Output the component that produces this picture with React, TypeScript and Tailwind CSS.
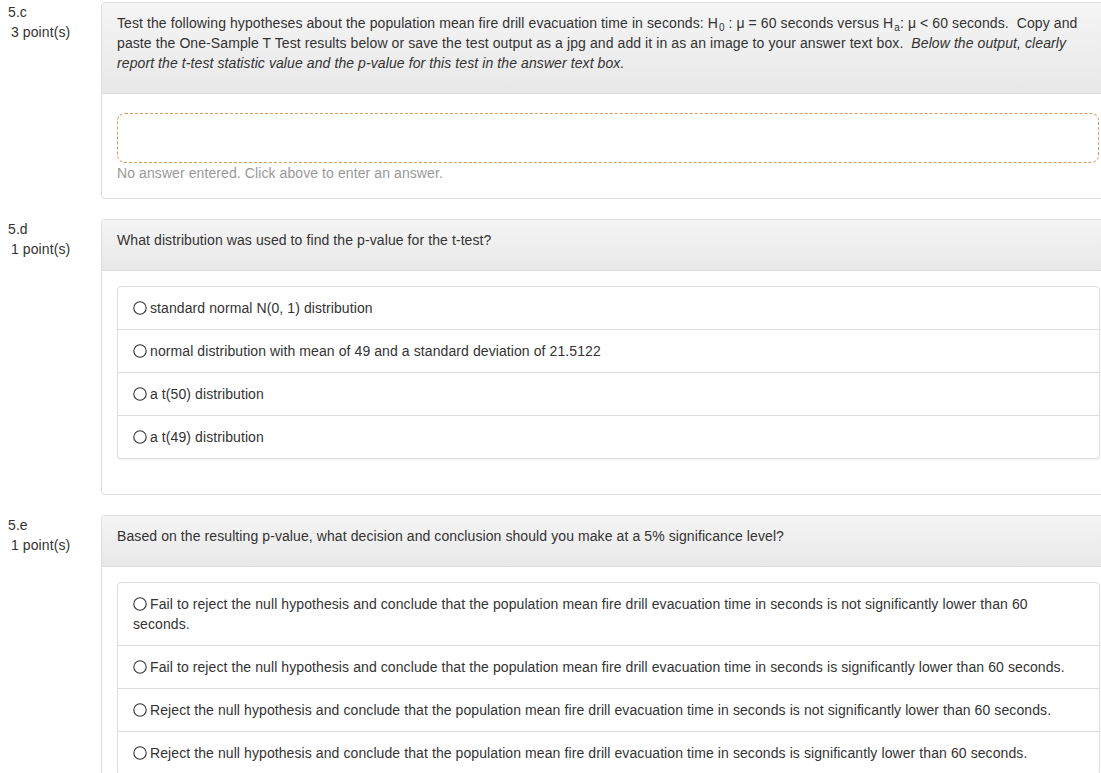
import React from "react";

function Radio() {
  return (
    <svg width="14" height="14" viewBox="0 0 14 14" className="inline-block align-[-2px] mr-[3px]">
      <circle cx="7" cy="7" r="6.2" fill="#fff" stroke="#333" strokeWidth="1.1" />
    </svg>
  );
}

function Label({ num, pts }: { num: string; pts: string }) {
  return (
    <div className="w-[101px] shrink-0 pl-[8px] leading-[20px]">
      <div>{num}</div>
      <div className="pl-[3px]">{pts}</div>
    </div>
  );
}

function Header({ children }: { children: React.ReactNode }) {
  return (
    <div className="bg-gradient-to-b from-[#f5f5f5] to-[#e8e8e8] border-b border-[#ddd] px-[15px] pt-[10px] pb-[20px] leading-[20px] rounded-t-[4px]">
      {children}
    </div>
  );
}

function Options({ items }: { items: string[] }) {
  return (
    <div className="border border-[#ddd] rounded-[4px] bg-white shadow-[0_1px_1px_rgba(0,0,0,0.06)]">
      {items.map((t, i) => (
        <div
          key={i}
          className={`pl-[15px] pr-[15px] py-[11px] leading-[20px] ${i > 0 ? "border-t border-[#ddd]" : ""}`}
        >
          <Radio />
          {t}
        </div>
      ))}
    </div>
  );
}

export default function App() {
  return (
    <div
      className="w-[1101px] h-[773px] overflow-hidden bg-white text-[#333] text-[14px] tracking-[0.09px]"
      style={{ fontFamily: '"Liberation Sans", Arial, sans-serif' }}
    >
      <div className="pt-[2px] flex flex-col gap-[20px]">
        {/* 5.c */}
        <div className="flex">
          <Label num="5.c" pts="3 point(s)" />
          <div className="w-[1015px] shrink-0 border border-[#ddd] rounded-[4px] bg-white">
            <Header>
              Test the following hypotheses about the population mean fire drill evacuation time in seconds: H
              <sub className="text-[10px] leading-none ml-[1px]">0</sub> : μ = 60 seconds versus H
              <sub className="text-[10px] leading-none ml-[1px]">a</sub>: μ &lt; 60 seconds.&nbsp; Copy and paste the One-Sample T
              Test results below or save the test output as a jpg and add it in as an image to your answer text box.&nbsp;{" "}
              <i>Below the output, clearly report the t-test statistic value and the p-value for this test in the answer text box.</i>
            </Header>
            <div className="px-[15px] pt-[19px] pb-[15px]">
              <div className="h-[50px] mr-[1px] border border-dashed border-[#d9995f] rounded-[8px]" />
              <div className="leading-[20px] text-[#999]">No answer entered. Click above to enter an answer.</div>
            </div>
          </div>
        </div>

        {/* 5.d */}
        <div className="flex">
          <Label num="5.d" pts="1 point(s)" />
          <div className="w-[1015px] shrink-0 border border-[#ddd] rounded-[4px] bg-white">
            <Header>What distribution was used to find the p-value for the t-test?</Header>
            <div className="px-[15px] pt-[15px] pb-[35px]">
              <Options
                items={[
                  "standard normal N(0, 1) distribution",
                  "normal distribution with mean of 49 and a standard deviation of 21.5122",
                  "a t(50) distribution",
                  "a t(49) distribution",
                ]}
              />
            </div>
          </div>
        </div>

        {/* 5.e */}
        <div className="flex">
          <Label num="5.e" pts="1 point(s)" />
          <div className="w-[1015px] shrink-0 border border-[#ddd] rounded-[4px] bg-white">
            <Header>Based on the resulting p-value, what decision and conclusion should you make at a 5% significance level?</Header>
            <div className="px-[15px] pt-[15px] pb-[35px]">
              <Options
                items={[
                  "Fail to reject the null hypothesis and conclude that the population mean fire drill evacuation time in seconds is not significantly lower than 60 seconds.",
                  "Fail to reject the null hypothesis and conclude that the population mean fire drill evacuation time in seconds is significantly lower than 60 seconds.",
                  "Reject the null hypothesis and conclude that the population mean fire drill evacuation time in seconds is not significantly lower than 60 seconds.",
                  "Reject the null hypothesis and conclude that the population mean fire drill evacuation time in seconds is significantly lower than 60 seconds.",
                ]}
              />
            </div>
          </div>
        </div>
      </div>
    </div>
  );
}
